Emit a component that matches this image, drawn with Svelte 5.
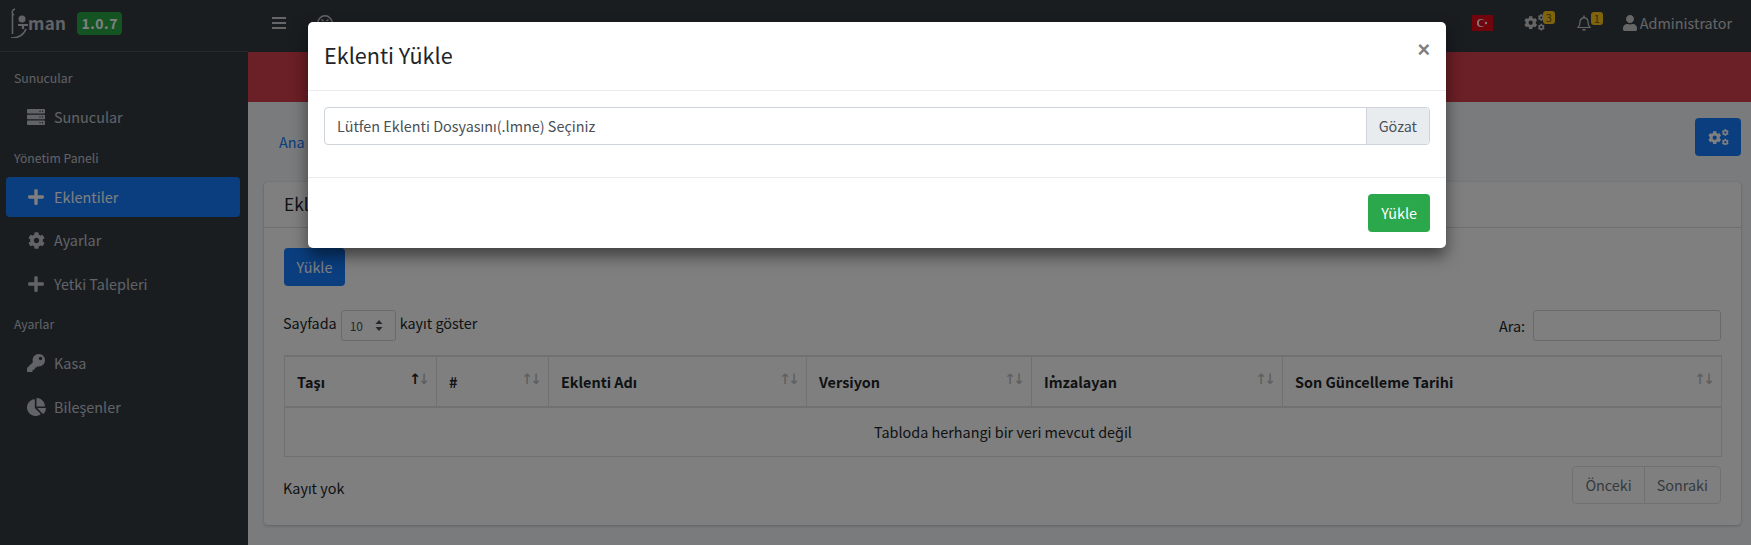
<script>
  const cog = "M487.4 315.7l-42.6-24.6c4.3-23.2 4.3-47 0-70.2l42.6-24.6c4.9-2.8 7.1-8.6 5.5-14-11.1-35.6-30-67.8-54.7-94.6-3.8-4.1-10-5.1-14.8-2.3L380.8 110c-17.9-15.4-38.5-27.3-60.8-35.1V25.8c0-5.6-3.9-10.5-9.4-11.7-36.7-8.2-74.3-7.8-109.2 0-5.5 1.2-9.4 6.1-9.4 11.7V75c-22.2 7.9-42.8 19.8-60.8 35.1L88.7 85.5c-4.9-2.8-11-1.9-14.8 2.3-24.7 26.7-43.6 58.9-54.7 94.6-1.7 5.4.6 11.2 5.5 14L67.3 221c-4.3 23.2-4.3 47 0 70.2l-42.6 24.6c-4.9 2.8-7.1 8.6-5.5 14 11.1 35.6 30 67.8 54.7 94.6 3.8 4.1 10 5.1 14.8 2.3l42.6-24.6c17.9 15.4 38.5 27.3 60.8 35.1v49.2c0 5.6 3.9 10.5 9.4 11.7 36.7 8.2 74.3 7.8 109.2 0 5.5-1.2 9.4-6.1 9.4-11.7v-49.2c22.2-7.9 42.8-19.8 60.8-35.1l42.6 24.6c4.9 2.8 11 1.9 14.8-2.3 24.7-26.7 43.6-58.9 54.7-94.6 1.5-5.5-.7-11.3-5.6-14.1zM256 336c-44.1 0-80-35.9-80-80s35.9-80 80-80 80 35.9 80 80-35.9 80-80 80z";
  const plus = "M416 208H272V64c0-17.67-14.33-32-32-32h-32c-17.67 0-32 14.33-32 32v144H32c-17.67 0-32 14.33-32 32v32c0 17.67 14.33 32 32 32h144v144c0 17.67 14.33 32 32 32h32c17.67 0 32-14.33 32-32V304h144c17.67 0 32-14.33 32-32v-32c0-17.67-14.33-32-32-32z";
  const key = "M512 176.001C512 273.203 433.202 352 336 352c-11.22 0-22.19-1.062-32.827-3.069l-24.012 27.014A23.999 23.999 0 0 1 261.223 384H224v40c0 13.255-10.745 24-24 24h-40v40c0 13.255-10.745 24-24 24H24c-13.255 0-24-10.745-24-24v-78.059c0-6.365 2.529-12.47 7.029-16.971l161.802-161.802C163.108 213.814 160 195.271 160 176 160 78.798 238.797.001 335.999 0 433.488-.001 512 78.511 512 176.001zM336 128c0 26.51 21.49 48 48 48s48-21.49 48-48-21.49-48-48-48-48 21.49-48 48z";
  const pie = "M527.79 288H290.5l158.03 158.03c6.04 6.04 15.98 6.53 22.19.68 38.7-36.46 65.32-85.61 73.13-140.86 1.34-9.46-6.51-17.85-16.06-17.85zm-15.83-64.8C503.72 103.74 408.26 8.28 288.8.04 279.68-.59 272 7.1 272 16.24V240h223.77c9.14 0 16.82-7.68 16.19-16.8zM224 288V50.71c0-9.55-8.39-17.4-17.84-16.06C86.99 51.49-4.1 155.6.14 280.37 4.5 408.51 114.83 513.59 243.03 511.98c50.4-.63 96.97-16.87 135.26-44.03 7.9-5.6 8.42-17.23 1.57-24.08L224 288z";
  const user = "M224 256c70.7 0 128-57.3 128-128S294.7 0 224 0 96 57.3 96 128s57.3 128 128 128zm89.6 32h-16.7c-22.2 10.2-46.9 16-72.9 16s-50.6-5.8-72.9-16h-16.7C60.2 288 0 348.2 0 422.4V464c0 26.5 21.5 48 48 48h352c26.5 0 48-21.5 48-48v-41.6c0-74.2-60.2-134.4-134.4-134.4z";

  const nav = [
    { title: "Sunucular", items: [{ label: "Sunucular", icon: "server" }] },
    {
      title: "Yönetim Paneli",
      items: [
        { label: "Eklentiler", icon: "plus", active: true },
        { label: "Ayarlar", icon: "cog" },
        { label: "Yetki Talepleri", icon: "plus" }
      ]
    },
    {
      title: "Ayarlar",
      items: [
        { label: "Kasa", icon: "key" },
        { label: "Bileşenler", icon: "pie" }
      ]
    }
  ];

  const columns = [
    { name: "Taşı", width: 152, sorted: true },
    { name: "#", width: 112 },
    { name: "Eklenti Adı", width: 258 },
    { name: "Versiyon", width: 225 },
    { name: "İmzalayan", width: 251 },
    { name: "Son Güncelleme Tarihi", width: 439 }
  ];
</script>

{#snippet cogs(size)}
  <svg class="cogs" width={size} height={size * 0.8} viewBox="0 0 640 512" fill="currentColor">
    <g transform="translate(0 60) scale(0.8)"><path d={cog} /></g>
    <g transform="translate(420 0) scale(0.42)"><path d={cog} /></g>
    <g transform="translate(420 295) scale(0.42)"><path d={cog} /></g>
  </svg>
{/snippet}

<div class="page">
  <aside class="sidebar">
    <div class="brand">
      <svg class="logo" width="19" height="30" viewBox="0 0 19 30" fill="none" stroke="currentColor" stroke-width="1.5">
        <path d="M5 1c-3 1-4 4-1 6 M2.500 6v20 M1 30c5 0 12-1 15-9" />
        <circle cx="12" cy="11" r="3.500" fill="currentColor" stroke="none" />
        <path d="M8 17h10 M13 17v4" stroke-width="2.200" />
      </svg>
      <span class="brand-name">man</span>
      <span class="version">1.0.7</span>
    </div>
    <nav>
      {#each nav as group}
        <div class="nav-title">{group.title}</div>
        {#each group.items as item}
          <div class="nav-item" class:active={item.active}>
            <span class="nav-icon">
              {#if item.icon === "server"}
                <svg width="18" height="16" viewBox="0 0 18 16">
                  <rect y="0" width="18" height="4.600" rx="0.800" fill="currentColor" />
                  <rect y="5.700" width="18" height="4.600" rx="0.800" fill="currentColor" />
                  <rect y="11.400" width="18" height="4.600" rx="0.800" fill="currentColor" />
                  <circle cx="13" cy="2.300" r="0.700" fill="#343a40" /><circle cx="15.500" cy="2.300" r="0.700" fill="#343a40" />
                  <circle cx="13" cy="8" r="0.700" fill="#343a40" /><circle cx="15.500" cy="8" r="0.700" fill="#343a40" />
                  <circle cx="13" cy="13.700" r="0.700" fill="#343a40" /><circle cx="15.500" cy="13.700" r="0.700" fill="#343a40" />
                </svg>
              {:else if item.icon === "plus"}
                <svg width="16" height="18" viewBox="0 0 448 512" fill="currentColor"><path d={plus} /></svg>
              {:else if item.icon === "cog"}
                <svg width="17" height="17" viewBox="0 0 512 512" fill="currentColor"><path d={cog} /></svg>
              {:else if item.icon === "key"}
                <svg width="18" height="18" viewBox="0 0 512 512" fill="currentColor"><path d={key} /></svg>
              {:else}
                <svg width="19" height="18" viewBox="0 0 544 512" fill="currentColor"><path d={pie} /></svg>
              {/if}
            </span>
            <span>{item.label}</span>
          </div>
        {/each}
      {/each}
    </nav>
  </aside>

  <div class="main">
    <header class="topbar">
      <div class="top-left">
        <svg width="14" height="12" viewBox="0 0 14 12" fill="currentColor">
          <rect width="14" height="2" /><rect y="5" width="14" height="2" /><rect y="10" width="14" height="2" />
        </svg>
        <svg class="face" width="16" height="16" viewBox="0 0 16 16" fill="none" stroke="currentColor" stroke-width="1.400">
          <circle cx="8" cy="8" r="7.200" />
          <path d="M4.500 4.500l2 1.500M11.500 4.500l-2 1.500" />
        </svg>
      </div>
      <div class="top-right">
        <svg class="flag" width="21" height="16" viewBox="0 0 21 16">
          <rect width="21" height="16" fill="#e30a17" />
          <circle cx="9" cy="8" r="4" fill="#fff" />
          <circle cx="10" cy="8" r="3.200" fill="#e30a17" />
          <circle cx="14" cy="8" r="1.200" fill="#fff" />
        </svg>
        <div class="top-icon gear-wrap">
          {@render cogs(21)}
          <span class="count">3</span>
        </div>
        <div class="top-icon bell-wrap">
          <svg width="14" height="16" viewBox="0 0 14 16" fill="none" stroke="currentColor" stroke-width="1.200">
            <path d="M1 12.500c1.200-1.200 2-2.500 2-5.500 0-2.500 1.800-4.200 4-4.200s4 1.700 4 4.200c0 3 .8 4.300 2 5.500z" />
            <path d="M7 .5v2 M5.500 14.700h3" stroke-width="1.400" />
          </svg>
          <span class="count">1</span>
        </div>
        <div class="account">
          <svg width="14" height="16" viewBox="0 0 448 512" fill="currentColor"><path d={user} /></svg>
          <span>Administrator</span>
        </div>
      </div>
    </header>
    <div class="alert-bar"></div>

    <div class="content">
      <div class="crumb-row">
        <a class="crumb" href="#top">Ana Sayfa</a>
        <button class="btn primary settings" type="button">{@render cogs(21)}</button>
      </div>

      <section class="card">
        <div class="card-header">Eklentiler</div>
        <div class="card-body">
          <button class="btn primary upload" type="button">Yükle</button>

          <div class="filters">
            <div class="length">
              <span>Sayfada</span>
              <div class="select">
                <span>10</span>
                <svg width="8" height="11" viewBox="0 0 8 11" fill="currentColor"><path d="M4 0l3.500 4h-7zM4 11L.5 7h7z" /></svg>
              </div>
              <span>kayıt göster</span>
            </div>
            <label class="search">
              <span>Ara:</span>
              <input type="text" />
            </label>
          </div>

          <table>
            <colgroup>
              {#each columns as col}
                <col style="width: {col.width}px" />
              {/each}
            </colgroup>
            <thead>
              <tr>
                {#each columns as col}
                  <th>
                    <div class="th-inner">
                      <span>{col.name}</span>
                      <span class="arrows"><span class:on={col.sorted}>↑</span><span>↓</span></span>
                    </div>
                  </th>
                {/each}
              </tr>
            </thead>
            <tbody>
              <tr>
                <td colspan="6">Tabloda herhangi bir veri mevcut değil</td>
              </tr>
            </tbody>
          </table>

          <div class="table-foot">
            <span class="info">Kayıt yok</span>
            <div class="pager">
              <span>Önceki</span>
              <span>Sonraki</span>
            </div>
          </div>
        </div>
      </section>
    </div>
  </div>

  <div class="backdrop"></div>

  <div class="modal">
    <div class="modal-header">
      <h4>Eklenti Yükle</h4>
      <span class="close">×</span>
    </div>
    <div class="modal-body">
      <div class="file">
        <span class="file-label">Lütfen Eklenti Dosyasını(.lmne) Seçiniz</span>
        <span class="file-btn">Gözat</span>
      </div>
    </div>
    <div class="modal-footer">
      <button class="btn success" type="button">Yükle</button>
    </div>
  </div>
</div>

<style>
  :global(body) {
    margin: 0;
    background: #f4f6f9;
  }

  .page {
    position: relative;
    display: flex;
    height: 545px;
    overflow: hidden;
    font-family: "Noto Sans CJK SC", "Noto Sans", sans-serif;
    font-size: 14.4px;
    line-height: 22px;
    color: #212529;
  }

  .sidebar {
    width: 248px;
    flex-shrink: 0;
    background: #343a40;
    color: #c2c7d0;
  }

  .brand {
    display: flex;
    align-items: center;
    height: 46px;
    padding: 0 0 5px 10px;
    border-bottom: 1px solid #4b545c;
  }

  .logo {
    flex-shrink: 0;
  }

  .brand-name {
    margin-left: -1px;
    font-size: 17px;
    font-weight: 700;
    letter-spacing: 0.3px;
  }

  .version {
    display: flex;
    align-items: center;
    justify-content: center;
    width: 45px;
    height: 23px;
    margin-left: 11px;
    border-radius: 4px;
    background: #28a745;
    color: #fff;
    font-size: 14px;
    font-weight: 700;
    letter-spacing: 0.5px;
  }

  nav {
    padding: 9px 8px 0 6px;
  }

  .nav-title {
    height: 34px;
    margin-bottom: 2px;
    padding-left: 8px;
    line-height: 34px;
    font-size: 12.24px;
  }

  .nav-item {
    display: flex;
    align-items: center;
    height: 40px;
    margin-bottom: 3.6px;
    padding-left: 20px;
    border-radius: 4px;
  }

  .nav-item.active {
    background: #147cff;
    color: #fff;
  }

  .nav-icon {
    display: flex;
    justify-content: center;
    width: 20px;
    margin-right: 8px;
  }

  .main {
    flex: 1;
    min-width: 0;
    display: flex;
    flex-direction: column;
  }

  .topbar {
    display: flex;
    align-items: center;
    justify-content: space-between;
    height: 52px;
    padding: 0 19px 0 24px;
    background: #343a40;
    color: rgba(255, 255, 255, 0.75);
    box-sizing: border-box;
  }

  .top-left {
    display: flex;
    align-items: center;
    gap: 31px;
    margin-top: -7px;
  }

  .top-right {
    display: flex;
    align-items: center;
    margin-top: -7px;
  }

  .flag {
    margin-right: 31px;
  }

  .top-icon {
    position: relative;
    display: flex;
  }

  .gear-wrap {
    margin-right: 32px;
  }

  .bell-wrap {
    margin-right: 32px;
  }

  .count {
    position: absolute;
    top: -3px;
    right: -10px;
    width: 12px;
    height: 13px;
    line-height: 13px;
    text-align: center;
    border-radius: 3px;
    background: #ffc918;
    color: #6e5820;
    font-size: 11px;
  }

  .bell-wrap .count {
    right: -12px;
  }

  .account {
    display: flex;
    align-items: center;
    gap: 3px;
  }

  .alert-bar {
    height: 50px;
    background: #d63f4d;
  }

  .content {
    padding: 0 10px 0 16px;
  }

  .crumb-row {
    display: flex;
    align-items: center;
    justify-content: space-between;
    padding: 16px 0 26px 15px;
  }

  .crumb {
    margin-top: 10px;
    color: #147cff;
    text-decoration: none;
  }

  .btn {
    display: inline-flex;
    align-items: center;
    justify-content: center;
    height: 38px;
    padding: 0 12px;
    border: 1px solid transparent;
    border-radius: 4px;
    color: #fff;
    font: inherit;
  }

  .primary {
    background: #147cff;
  }

  .success {
    background: #2ca84c;
  }

  .settings {
    width: 46px;
    padding: 0;
  }

  .upload {
    width: 61px;
    padding: 0;
  }

  .card {
    background: #fff;
    border-radius: 4px;
    box-shadow: 0 0 1px rgba(0, 0, 0, 0.125), 0 1px 3px rgba(0, 0, 0, 0.2);
  }

  .card-header {
    height: 46px;
    padding-left: 20px;
    line-height: 44px;
    font-size: 17.28px;
    border-bottom: 1px solid rgba(0, 0, 0, 0.125);
    box-sizing: border-box;
  }

  .card-body {
    padding: 20px 20px 21px;
  }

  .filters {
    display: flex;
    align-items: center;
    justify-content: space-between;
    margin-top: 24px;
    height: 31px;
  }

  .length {
    display: flex;
    align-items: center;
    margin-left: -1px;
  }

  .length > span {
    margin-top: -5px;
  }

  .select {
    display: flex;
    align-items: center;
    justify-content: space-between;
    width: 55px;
    height: 31px;
    margin: 0 4px 0 4px;
    padding: 0 12px 0 8px;
    border: 1px solid #ced4da;
    border-radius: 3px;
    box-sizing: border-box;
    color: #495057;
    font-size: 12px;
  }

  .search {
    display: flex;
    align-items: center;
    gap: 8px;
  }

  .search input {
    width: 188px;
    height: 31px;
    padding: 0 8px;
    border: 1px solid #ced4da;
    border-radius: 3px;
    box-sizing: border-box;
    background: #fff;
  }

  table {
    width: 100%;
    margin-top: 14px;
    border-collapse: collapse;
    table-layout: fixed;
    border: 1px solid #dee2e6;
  }

  th {
    height: 51px;
    padding: 0 9px 0 12px;
    border: 1px solid #dee2e6;
    border-top-width: 2px;
    border-bottom-width: 2px;
    font-weight: 700;
    text-align: left;
    box-sizing: border-box;
  }

  .th-inner {
    display: flex;
    align-items: center;
    justify-content: space-between;
  }

  .arrows {
    margin-top: -5px;
    font-family: "DejaVu Sans", sans-serif;
    font-size: 14.4px;
    font-weight: 700;
    color: rgba(33, 37, 41, 0.3);
    letter-spacing: -3px;
  }

  .arrows .on {
    color: #212529;
  }

  td {
    height: 49px;
    padding: 0;
    text-align: center;
    box-sizing: border-box;
  }

  .table-foot {
    display: flex;
    align-items: center;
    justify-content: space-between;
    margin-top: 9px;
  }

  .info {
    margin-top: 6px;
    margin-left: -1px;
  }

  .pager {
    display: flex;
    height: 38px;
    border: 1px solid #dee2e6;
    border-radius: 4px;
    box-sizing: border-box;
    color: #6c757d;
  }

  .pager span {
    padding: 0 12px;
    line-height: 36px;
  }

  .pager span + span {
    border-left: 1px solid #dee2e6;
  }

  .backdrop {
    position: absolute;
    inset: 0;
    background: rgba(0, 0, 0, 0.5);
  }

  .modal {
    position: absolute;
    top: 22px;
    left: 308px;
    width: 1138px;
    height: 226px;
    background: #fff;
    border-radius: 5px;
    box-shadow: 0 8px 16px rgba(0, 0, 0, 0.5);
  }

  .modal-header {
    display: flex;
    align-items: center;
    justify-content: space-between;
    height: 69px;
    padding: 0 16px;
    border-bottom: 1px solid #e9ecef;
    box-sizing: border-box;
  }

  h4 {
    margin: 0;
    font-size: 21.6px;
    font-weight: 400;
    line-height: 26px;
    margin-top: -3px;
  }

  .close {
    margin-top: -12px;
    font-family: "Liberation Sans", sans-serif;
    font-size: 21.6px;
    font-weight: 700;
    color: #7f7f7f;
  }

  .modal-body {
    height: 87px;
    padding: 16px;
    border-bottom: 1px solid #e9ecef;
    box-sizing: border-box;
  }

  .file {
    display: flex;
    height: 38px;
    border: 1px solid #ced4da;
    border-radius: 4px;
    box-sizing: border-box;
    color: #495057;
  }

  .file-label {
    flex: 1;
    padding-left: 12px;
    line-height: 36px;
  }

  .file-btn {
    padding: 0 12px;
    line-height: 36px;
    background: #e9ecef;
    border-left: 1px solid #ced4da;
    border-radius: 0 3px 3px 0;
  }

  .modal-footer {
    display: flex;
    justify-content: flex-end;
    padding: 16px;
  }
</style>
